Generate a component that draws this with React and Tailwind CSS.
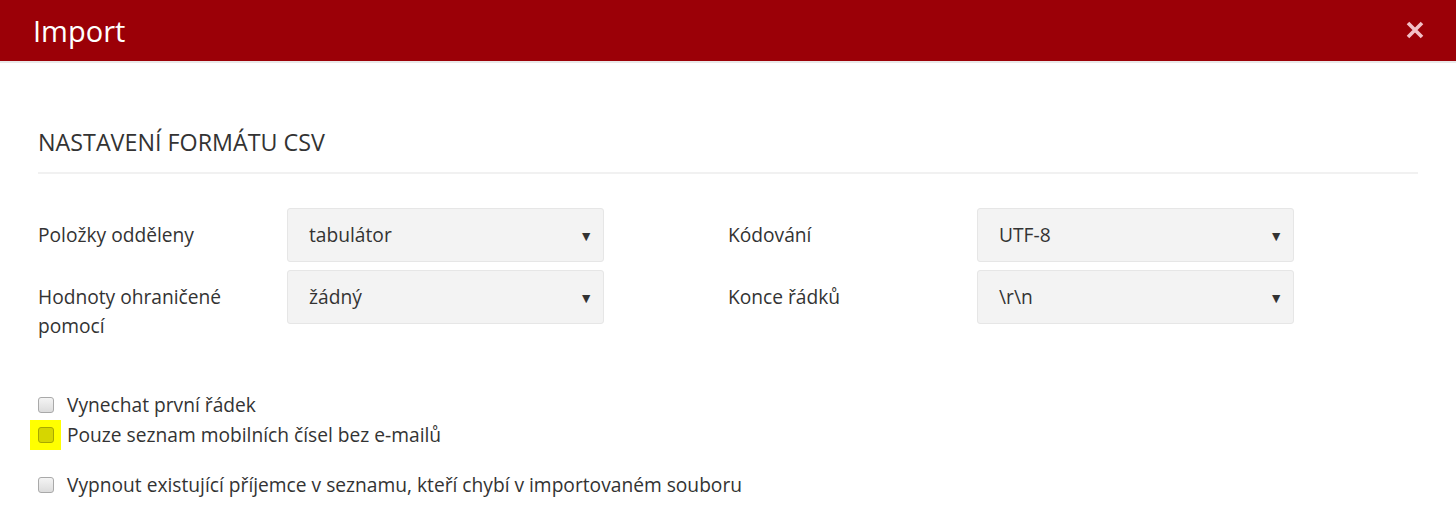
import React from 'react';

const font = { fontFamily: '"Open Sans", "Noto Sans", sans-serif' };

const Select = ({ value }) => (
  <div className="flex h-[54px] w-[317px] items-center justify-between rounded-[3px] border border-[#e6e6e6] bg-[#f3f3f3] pl-[21px] pr-[10px] text-[19.2px] text-[#333]">
    <span>{value}</span>
    <span className="text-[14px] text-[#333]">▼</span>
  </div>
);

const Field = ({ label, value }) => (
  <div className="flex w-[690px] items-start">
    <div className="w-[249px] pt-[12px] text-[19.2px] leading-[29px] text-[#333]">{label}</div>
    <Select value={value} />
  </div>
);

const Checkbox = ({ label, highlight }) => (
  <div className="flex h-[30px] items-center">
    <div className="relative flex w-[29px] items-center">
      {highlight && <div className="absolute left-[-8px] top-[-7px] h-[30px] w-[31px] bg-[#ffff00]" />}
      <div
        className={
          highlight
            ? 'relative h-[16px] w-[16px] rounded-[3px] border border-[#a8a800] bg-[#d6d600]'
            : 'relative h-[16px] w-[16px] rounded-[3px] border border-[#a9a9a9] bg-gradient-to-b from-[#f4f4f4] to-[#dcdcdc]'
        }
      />
    </div>
    <span className="text-[19.2px] text-[#333]">{label}</span>
  </div>
);

export default function App() {
  return (
    <div className="h-[506px] w-[1456px] overflow-hidden bg-white" style={font}>
      <header className="flex h-[63px] items-center justify-between border-b-2 border-[#e9e9e9] bg-[#9b0007] pl-[33px] pr-[32px]">
        <h1 className="text-[29px] leading-none text-white">Import</h1>
        <svg width="18" height="18" viewBox="0 0 18 18" className="mb-[2px]">
          <path d="M2 2L16 16M16 2L2 16" stroke="#f2c0c7" strokeWidth="3.6" />
        </svg>
      </header>

      <main className="px-[38px] pt-[65px]">
        <h2 className="text-[23.3px] leading-[28px] text-[#333]">NASTAVENÍ FORMÁTU CSV</h2>
        <div className="mt-[16px] h-[2px] bg-[#f1f1f1]" />

        <div className="mt-[34px] flex flex-col gap-[8px]">
          <div className="flex">
            <Field label="Položky odděleny" value="tabulátor" />
            <Field label="Kódování" value="UTF-8" />
          </div>
          <div className="flex">
            <Field label={<>Hodnoty ohraničené<br />pomocí</>} value="žádný" />
            <Field label="Konce řádků" value="\r\n" />
          </div>
        </div>

        <div className="mt-[50px] flex flex-col">
          <Checkbox label="Vynechat první řádek" />
          <Checkbox label="Pouze seznam mobilních čísel bez e-mailů" highlight />
          <div className="mt-[20px]">
            <Checkbox label="Vypnout existující příjemce v seznamu, kteří chybí v importovaném souboru" />
          </div>
        </div>
      </main>
    </div>
  );
}
